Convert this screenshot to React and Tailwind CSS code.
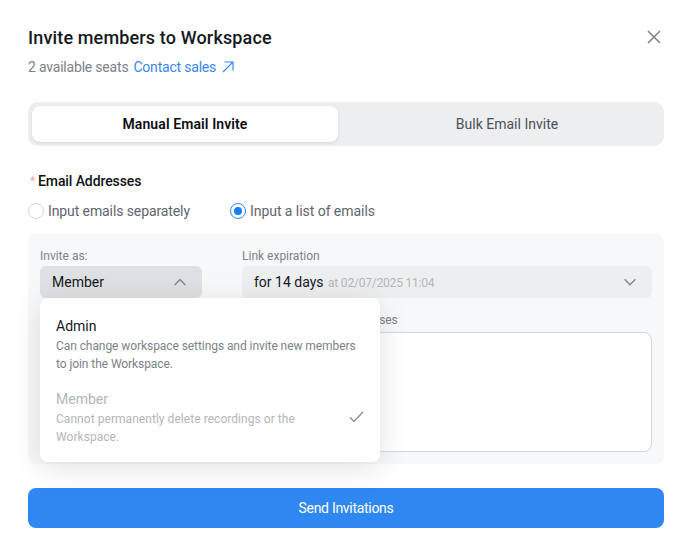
import React from "react";

function Chevron({ up, className }) {
  return (
    <svg width="14" height="14" viewBox="0 0 14 14" fill="none" stroke="currentColor" strokeWidth="1.4" className={className}>
      <path d={up ? "M1.7 10 L7 4.6 L12.3 10" : "M1.7 4.3 L7 9.7 L12.3 4.3"} />
    </svg>
  );
}

export default function App() {
  return (
    <div className="w-[693px] h-[549px] bg-white px-[28px] pt-[26px] font-['Roboto',sans-serif] overflow-hidden">
      <div className="flex items-start justify-between w-[636px]">
        <h1 className="text-[18px] leading-[24px] font-medium tracking-[0.15px] text-[#15191e]">Invite members to Workspace</h1>
        <svg width="14" height="14" viewBox="0 0 14 14" fill="none" stroke="#7f858d" strokeWidth="1.6" className="mt-[4px] mr-[3px]">
          <path d="M1 1 L13 13 M13 1 L1 13" />
        </svg>
      </div>
      <div className="flex items-center mt-[7px] h-[20px] text-[14px] leading-[20px] tracking-[-0.2px]">
        <span className="text-[#7c828a]">2 available seats</span>
        <span className="ml-[5px] text-[#3b86f0]">Contact sales</span>
        <svg width="12" height="12" viewBox="0 0 12 12" fill="none" stroke="#3b86f0" strokeWidth="1.2" className="ml-[6px]">
          <path d="M1 11 L11 1 M2.5 1 H11 V9.5" />
        </svg>
      </div>

      <div className="mt-[25px] w-[636px] h-[44px] rounded-[10px] bg-[#edeef0] p-[4px] flex text-[14px]">
        <div className="w-[306px] pt-[1px] rounded-[8px] bg-white shadow-[0_1px_3px_rgba(0,0,0,0.1)] flex items-center justify-center font-semibold tracking-[0.1px] text-[#0b0d10]">Manual Email Invite</div>
        <div className="flex-1 pl-[16px] pt-[1px] flex items-center justify-center text-[#4b5058]">Bulk Email Invite</div>
      </div>

      <div className="mt-[25px] h-[20px] flex items-center text-[14px] leading-[20px]">
        <span className="text-[#f5a8a3] w-[8px] ml-[2px] text-[12px]">*</span>
        <span className="font-medium tracking-[-0.1px] text-[#0f1216]">Email Addresses</span>
      </div>

      <div className="mt-[10px] h-[20px] flex items-center text-[14px] text-[#5f656d]">
        <span className="w-[16px] h-[16px] rounded-full border border-[#d5d7da] bg-white mr-[4px]" />
        <span className="w-[182px] tracking-[-0.1px]">Input emails separately</span>
        <span className="w-[16px] h-[16px] rounded-full border border-[#2f88f2] bg-white mr-[4px] flex items-center justify-center">
          <span className="w-[8px] h-[8px] rounded-full bg-[#1a7ef5]" />
        </span>
        <span className="tracking-[-0.05px]">Input a list of emails</span>
      </div>

      <div className="relative mt-[13px] w-[636px] h-[230px] rounded-[8px] bg-[#f7f8fa] pt-[14px] px-[12px]">
        <div className="flex gap-[40px]">
          <div className="w-[162px]">
            <div className="text-[12px] leading-[16px] text-[#7c828a]">Invite as:</div>
            <div className="mt-[2px] h-[32px] rounded-[6px] bg-[#dfe0e3] flex items-center justify-between pl-[12px] pr-[15px] text-[14px] text-[#15191e]">
              Member
              <Chevron up className="text-[#7f858d]" />
            </div>
          </div>
          <div className="flex-1">
            <div className="text-[12px] leading-[16px] text-[#7c828a]">Link expiration</div>
            <div className="mt-[2px] h-[32px] rounded-[6px] bg-[#edeef0] flex items-center justify-between pl-[12px] pr-[15px] text-[14px] text-[#15191e]">
              <span>for 14 days <span className="ml-[1px] text-[12px] tracking-[-0.2px] text-[#b3b6bb]">at 02/07/2025 11:04</span></span>
              <Chevron className="text-[#7f858d]" />
            </div>
          </div>
        </div>
        <div className="ml-[202px] mt-[14px]">
          <div className="text-[12px] leading-[16px] tracking-[-0.15px] text-[#7c828a]">Input a list of email addresses</div>
          <div className="mt-[4px] h-[120px] rounded-[8px] border border-[#d5d7da] bg-white" />
        </div>

        <div className="absolute left-[12px] top-[64px] w-[340px] h-[164px] rounded-[8px] bg-white shadow-[0_6px_30px_rgba(0,0,0,0.12)] px-[16px] pt-[18px]">
          <div className="text-[14px] leading-[20px] text-[#15191e]">Admin</div>
          <div className="mt-[1px] text-[12px] leading-[18px] tracking-[-0.07px] text-[#7c828a] whitespace-nowrap">
            Can change workspace settings and invite new members<br />to join the Workspace.
          </div>
          <div className="relative mt-[16px]">
            <div className="text-[14px] leading-[20px] text-[#b3b6bb]">Member</div>
            <div className="mt-[1px] text-[12px] leading-[18px] tracking-[0.05px] text-[#b3b6bb] whitespace-nowrap">
              Cannot permanently delete recordings or the<br />Workspace.
            </div>
            <svg width="15" height="12" viewBox="0 0 15 12" fill="none" stroke="#7f858d" strokeWidth="1.2" className="absolute right-0 top-[22px]">
              <path d="M1 6.5 L5 10.5 L14 1" />
            </svg>
          </div>
        </div>
      </div>

      <button className="mt-[24px] w-[636px] h-[40px] rounded-[8px] bg-[#2f88f2] text-white text-[14px] tracking-[-0.3px] flex items-center justify-center">Send Invitations</button>
    </div>
  );
}
